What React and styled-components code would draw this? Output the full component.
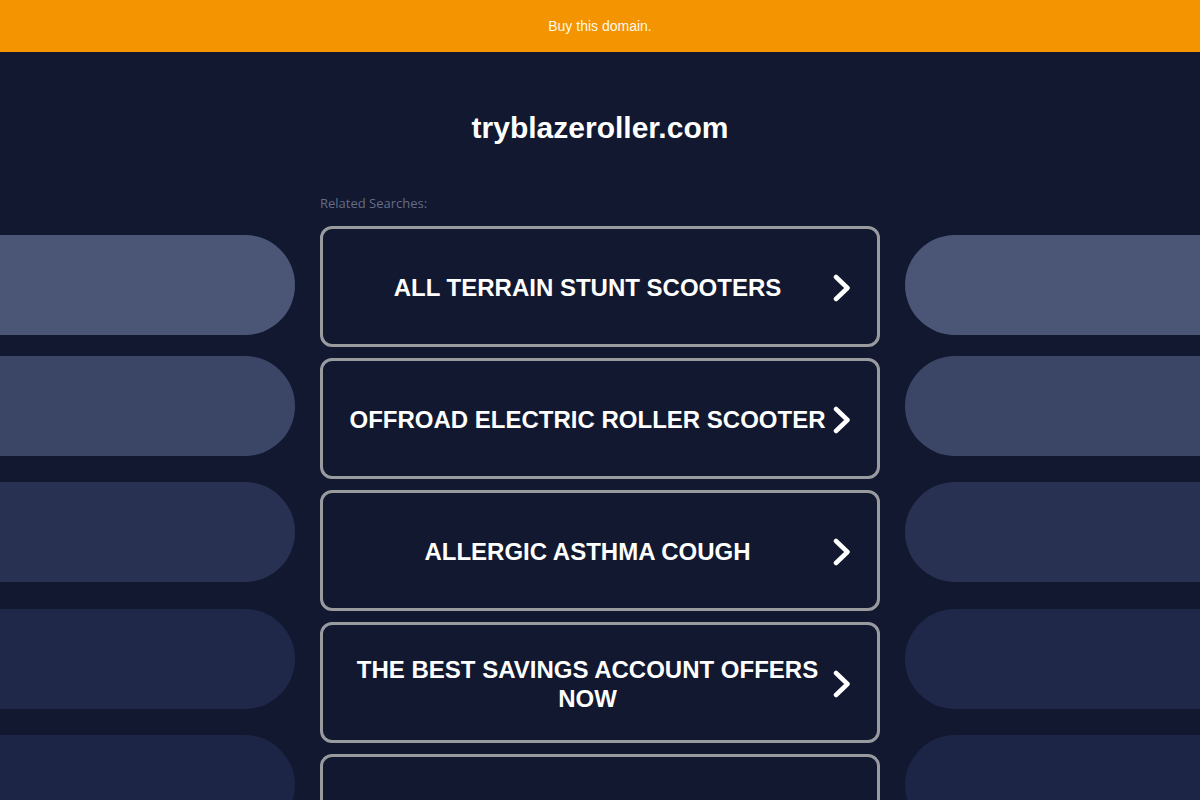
import React from "react";
import styled, { createGlobalStyle } from "styled-components";

const Global = createGlobalStyle`
  html, body { margin: 0; padding: 0; }
  body {
    background: #111830;
    font-family: "Liberation Sans", Arial, sans-serif;
    overflow: hidden;
    height: 800px;
  }
`;

const Page = styled.div`
  width: 1200px;
  height: 800px;
  overflow: hidden;
  background: #111830;
`;

const TopBar = styled.a`
  display: flex;
  align-items: center;
  justify-content: center;
  height: 52px;
  background: #f39400;
  color: #fff8ea;
  font-size: 14px;
  text-decoration: none;
`;

const Title = styled.h1`
  margin: 59px 0 0;
  text-align: center;
  color: #ffffff;
  font-size: 30px;
  line-height: 34px;
  font-weight: 700;
`;

const Layout = styled.div`
  display: grid;
  grid-template-columns: 295px 560px 295px;
  column-gap: 25px;
  margin-top: 49px;
`;

const Side = styled.div`
  display: flex;
  flex-direction: column;
  padding-top: 41px;
  align-items: ${(p) => (p.$right ? "flex-start" : "flex-end")};
`;

const Pill = styled.div`
  width: 360px;
  height: 100px;
  flex: none;
  margin-top: ${(p) => p.$gap}px;
  border-radius: ${(p) => (p.$right ? "50px 0 0 50px" : "0 50px 50px 0")};
  background: ${(p) => p.$color};
`;

const Center = styled.div`
  display: flex;
  flex-direction: column;
`;

const Label = styled.div`
  font-family: "Open Sans", "Liberation Sans", sans-serif;
  font-size: 13px;
  line-height: 18px;
  color: #666d86;
  margin-bottom: 14px;
`;

const List = styled.div`
  display: flex;
  flex-direction: column;
  gap: 11px;
`;

const Result = styled.a`
  display: flex;
  align-items: center;
  box-sizing: border-box;
  height: 121px;
  padding: 2px 20px 0;
  border: 3px solid #9a9b9f;
  border-radius: 12px;
  background: #111830;
  text-decoration: none;
`;

const ResultText = styled.span`
  flex: 1;
  text-align: center;
  color: #ffffff;
  font-weight: 700;
  font-size: 24px;
  line-height: 29px;
  text-transform: uppercase;
`;

const Arrow = styled.span`
  width: 25px;
  flex: none;
  display: flex;
  align-items: center;
`;

const Chevron = () => (
  <svg width="22" height="28" viewBox="0 0 22 28">
    <polyline
      points="4,3 15.5,14 4,25"
      fill="none"
      stroke="#ffffff"
      strokeWidth="4.5"
      strokeLinecap="round"
      strokeLinejoin="round"
    />
  </svg>
);

const searches = [
  "All Terrain Stunt Scooters",
  "Offroad Electric Roller Scooter",
  "Allergic Asthma Cough",
  "The Best Savings Account Offers Now",
  "",
];

const pills = [
  { gap: 0, color: "#4b5676" },
  { gap: 21, color: "#3b4566" },
  { gap: 26, color: "#283151" },
  { gap: 27, color: "#1f2848" },
  { gap: 26, color: "#1d2546" },
];

export default function App() {
  return (
    <Page>
      <Global />
      <TopBar href="#">Buy this domain.</TopBar>
      <Title>tryblazeroller.com</Title>
      <Layout>
        <Side>
          {pills.map((p, i) => (
            <Pill key={i} $gap={p.gap} $color={p.color} />
          ))}
        </Side>
        <Center>
          <Label>Related Searches:</Label>
          <List>
            {searches.map((s, i) => (
              <Result key={i} href="#">
                <ResultText>{s}</ResultText>
                <Arrow>{s && <Chevron />}</Arrow>
              </Result>
            ))}
          </List>
        </Center>
        <Side $right>
          {pills.map((p, i) => (
            <Pill key={i} $right $gap={p.gap} $color={p.color} />
          ))}
        </Side>
      </Layout>
    </Page>
  );
}
